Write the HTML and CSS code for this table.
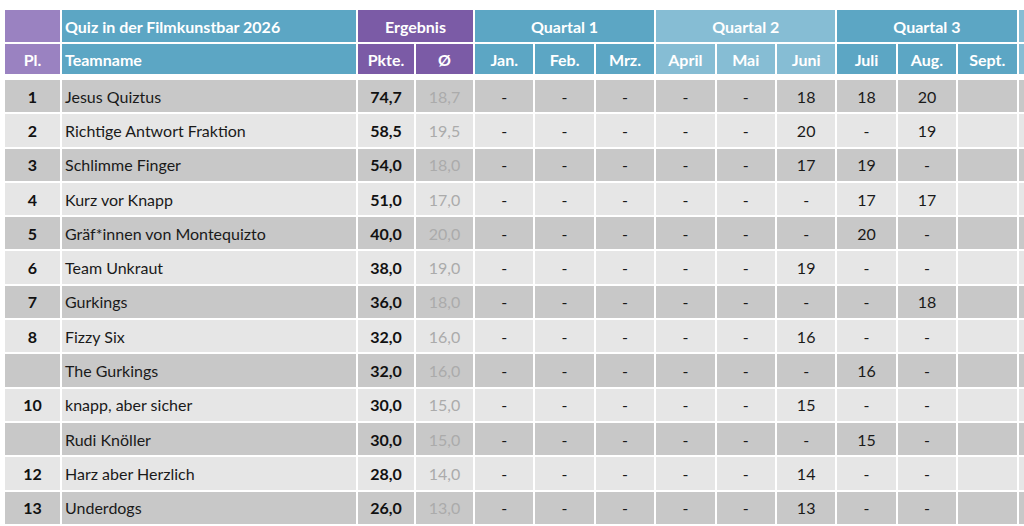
FILE: index.html
```html
<!DOCTYPE html>
<html lang="de">
<head>
<meta charset="utf-8">
<title>Quiz in der Filmkunstbar 2026</title>
<link rel="stylesheet" href="styles.css">
</head>
<body>
<div class="sheet">
  <div class="grid head">
    <div class="c pl-h"></div>
    <div class="c teal left">Quiz in der Filmkunstbar 2026</div>
    <div class="c purple span2">Ergebnis</div>
    <div class="c teal span3">Quartal 1</div>
    <div class="c lteal span3">Quartal 2</div>
    <div class="c teal span3">Quartal 3</div>
    <div class="c lteal"></div>

    <div class="c pl-h">Pl.</div>
    <div class="c teal left">Teamname</div>
    <div class="c purple">Pkte.</div>
    <div class="c purple">Ø</div>
    <div class="c teal">Jan.</div>
    <div class="c teal">Feb.</div>
    <div class="c teal">Mrz.</div>
    <div class="c lteal">April</div>
    <div class="c lteal">Mai</div>
    <div class="c lteal">Juni</div>
    <div class="c teal">Juli</div>
    <div class="c teal">Aug.</div>
    <div class="c teal">Sept.</div>
    <div class="c lteal"></div>
  </div>
  <div class="grid body" id="body"></div>
</div>
<script src="app.js"></script>
</body>
</html>
```

FILE: app.js
```js
const rows = [
  ["1","Jesus Quiztus","74,7","18,7",["-","-","-","-","-","18","18","20",""]],
  ["2","Richtige Antwort Fraktion","58,5","19,5",["-","-","-","-","-","20","-","19",""]],
  ["3","Schlimme Finger","54,0","18,0",["-","-","-","-","-","17","19","-",""]],
  ["4","Kurz vor Knapp","51,0","17,0",["-","-","-","-","-","-","17","17",""]],
  ["5","Gräf*innen von Montequizto","40,0","20,0",["-","-","-","-","-","-","20","-",""]],
  ["6","Team Unkraut","38,0","19,0",["-","-","-","-","-","19","-","-",""]],
  ["7","Gurkings","36,0","18,0",["-","-","-","-","-","-","-","18",""]],
  ["8","Fizzy Six","32,0","16,0",["-","-","-","-","-","16","-","-",""]],
  ["","The Gurkings","32,0","16,0",["-","-","-","-","-","-","16","-",""]],
  ["10","knapp, aber sicher","30,0","15,0",["-","-","-","-","-","15","-","-",""]],
  ["","Rudi Knöller","30,0","15,0",["-","-","-","-","-","-","15","-",""]],
  ["12","Harz aber Herzlich","28,0","14,0",["-","-","-","-","-","14","-","-",""]],
  ["13","Underdogs","26,0","13,0",["-","-","-","-","-","13","-","-",""]]
];
const body = document.getElementById("body");
rows.forEach((r, i) => {
  const tone = i % 2 === 0 ? "dark" : "light";
  const cells = [];
  cells.push(`<div class="c ${tone} pl">${r[0]}</div>`);
  cells.push(`<div class="c ${tone} left">${r[1]}</div>`);
  cells.push(`<div class="c ${tone} pts">${r[2]}</div>`);
  cells.push(`<div class="c ${tone} avg">${r[3]}</div>`);
  r[4].forEach(v => cells.push(`<div class="c ${tone}">${v}</div>`));
  cells.push(`<div class="c ${tone}"></div>`);
  body.insertAdjacentHTML("beforeend", cells.join(""));
});
```

FILE: styles.css
```css
html, body {
  margin: 0;
  padding: 0;
  background: #ffffff;
  overflow: hidden;
}
body {
  font-family: Lato, "Open Sans", "Liberation Sans", sans-serif;
  font-size: 16px;
  color: #1a1a1a;
}
.sheet {
  padding: 10px 0 0 5px;
  width: max-content;
}
.grid {
  display: grid;
  grid-template-columns: 55px 294px 56px 57px repeat(10, 58.4px);
  column-gap: 2px;
  row-gap: 2px;
}
.head {
  grid-template-rows: 32px 30px;
}
.body {
  margin-top: 6px;
  grid-auto-rows: 32.3px;
}
.c {
  display: flex;
  align-items: center;
  justify-content: center;
  white-space: nowrap;
  overflow: hidden;
}
.left {
  justify-content: flex-start;
  padding-left: 3px;
}
.head .c {
  color: #ffffff;
  font-weight: 700;
  font-size: 16px;
}
.span2 { grid-column: span 2; }
.span3 { grid-column: span 3; }
.pl-h { background: #9a82c1; }
.purple { background: #7b5ba6; }
.teal { background: #5ca6c4; }
.lteal { background: #86bdd4; }
.dark { background: #c8c8c8; }
.light { background: #e6e6e6; }
.pl, .pts { font-weight: 700; color: #111111; }
.avg { color: #ababab; }
```
